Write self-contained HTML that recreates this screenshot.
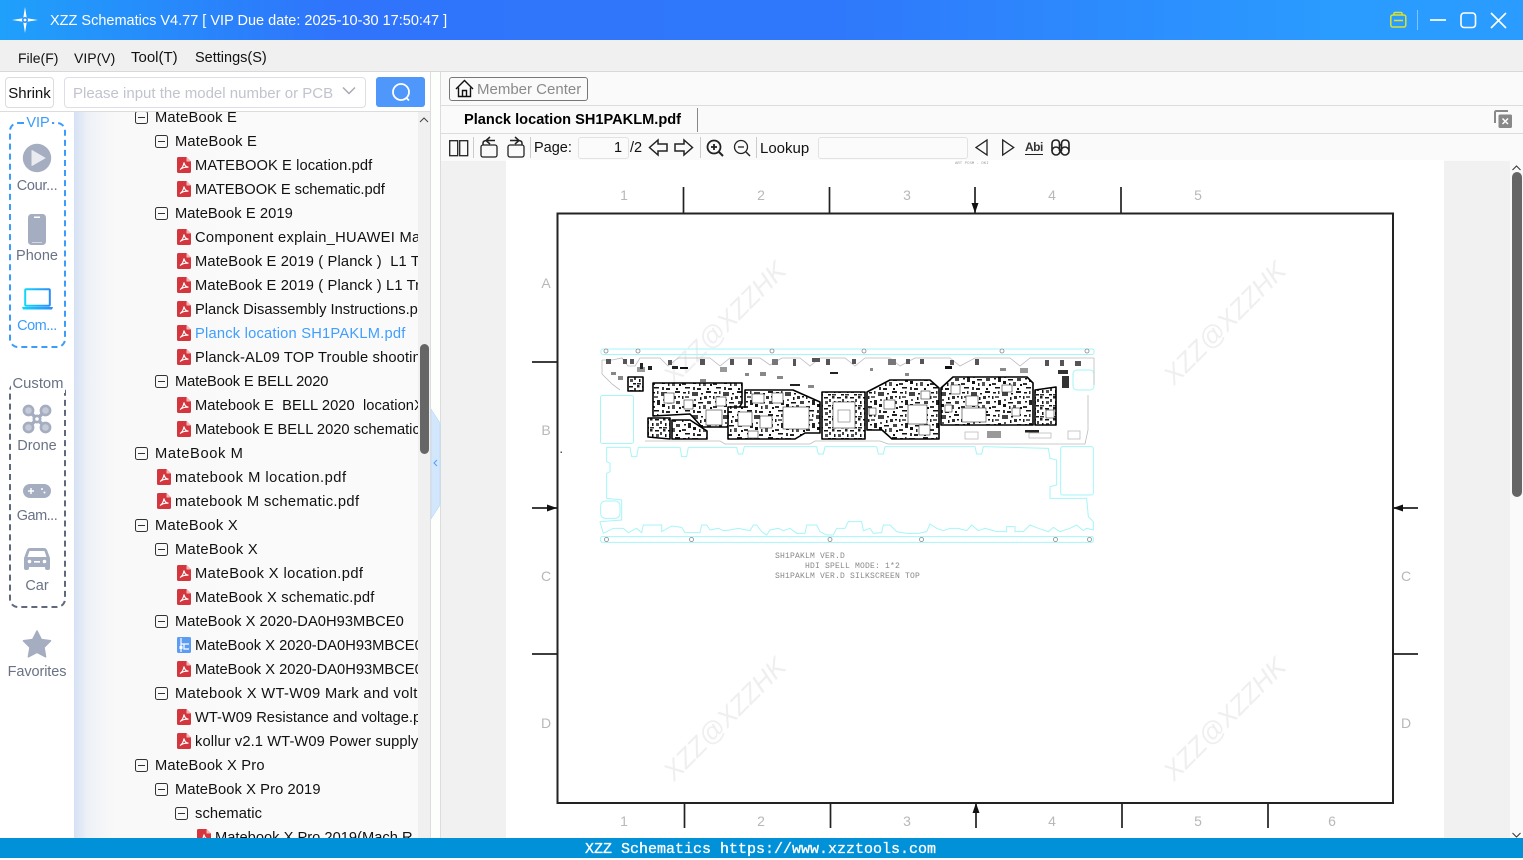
<!DOCTYPE html>
<html><head><meta charset="utf-8"><title>XZZ Schematics</title>
<style>
html,body{margin:0;padding:0}
body{width:1523px;height:858px;overflow:hidden;position:relative;background:#fff;font-family:"Liberation Sans","Noto Sans CJK SC",sans-serif;color:#111}
.a{position:absolute}
.t{position:absolute;white-space:nowrap}
#title{left:0;top:0;width:1523px;height:40px;background:linear-gradient(90deg,#1fa0fb 0,#2f74fb 22%,#2f78fb 55%,#2a9cff 88%,#2a9cff 100%)}
#menu{left:0;top:40px;width:1523px;height:31px;background:#f0f0f0;border-bottom:1px solid #d9d9d9}
.m{position:absolute;top:49px;font-size:14.5px;color:#111;line-height:18px;white-space:nowrap}
#lefttop{left:0;top:72px;width:430px;height:39px;background:#fff;border-bottom:1px solid #dcdcdc}
#side{left:0;top:112px;width:74px;height:726px;background:#fff}
#treebg{left:74px;top:112px;width:344px;height:726px;background:linear-gradient(90deg,#d5e1f3 0,#eef1f7 14px,#f9f9f9 40px,#fafafa 100%);overflow:hidden}
.r{position:absolute;height:24px;line-height:26px;font-size:14.7px;white-space:nowrap;color:#111}
.r svg{position:absolute;left:-18px;top:4px}
.box{position:absolute;width:10.5px;height:10.5px;border:1.3px solid #333;border-radius:2.5px;left:-20px;top:6px;background:transparent}
.box:after{content:"";position:absolute;left:2px;top:4.5px;width:6.5px;height:1.3px;background:#333}
.lab{position:absolute;left:4px;width:66px;text-align:center;font-size:14.5px;line-height:18px;color:#6a7285;white-space:nowrap}
#viewer{left:441px;top:161px;width:1069px;height:677px;background:#f1f1f1}
#page{left:506px;top:160px;width:938px;height:678px;background:#fff}
#foot{left:0;top:838px;width:1523px;height:20px;background:#0091d8}
</style></head><body>

<svg width="0" height="0" style="position:absolute"><defs>
<symbol id="pdf" viewBox="0 0 14 16">
<path d="M1.5 0H9.5L14 4.5V14.5A1.5 1.5 0 0 1 12.5 16H1.5A1.5 1.5 0 0 1 0 14.5V1.5A1.5 1.5 0 0 1 1.5 0Z" fill="#d4363e"/>
<path d="M9.5 0L14 4.5H9.5Z" fill="#f2b6b8"/>
<path d="M3 12.5C5 11.5 6.5 8.5 7 5.5C7.4 8 9 10 11.5 10.2C9 10 5.5 10.5 3 12.5Z" fill="none" stroke="#fff" stroke-width="1.1"/>
</symbol>
<symbol id="sch" viewBox="0 0 14 16">
<rect width="14" height="16" rx="1.5" fill="#5d9cf5"/>
<path d="M4 1V7H9M4 7V15M9 7H12M7 7V12H12" fill="none" stroke="#fff" stroke-width="1.2"/>
<rect x="2.5" y="9" width="3" height="3" fill="#fff"/>
</symbol>
<pattern id="c1" width="31" height="23" patternUnits="userSpaceOnUse">
<rect width="31" height="23" fill="#fff"/>
<rect x="1" y="1" width="3" height="1.5" fill="#111"/><rect x="6" y="0" width="1.5" height="3" fill="#333"/><rect x="10" y="1" width="6" height="4" fill="#444"/><rect x="19" y="2" width="2" height="1.5" fill="#111"/><rect x="24" y="0" width="5" height="2" fill="#222"/>
<rect x="0" y="5" width="1.5" height="3" fill="#222"/><rect x="3" y="5" width="4" height="2" fill="#666"/><rect x="18" y="6" width="1.5" height="3" fill="#111"/><rect x="22" y="5" width="3" height="3" fill="#333"/><rect x="27" y="5" width="2" height="1.5" fill="#111"/>
<rect x="2" y="10" width="2" height="1.5" fill="#111"/><rect x="6" y="9" width="3" height="5" fill="#222"/><rect x="12" y="8" width="2" height="2" fill="#555"/><rect x="16" y="11" width="5" height="1.5" fill="#111"/><rect x="25" y="10" width="4" height="3" fill="#444"/>
<rect x="0" y="15" width="4" height="2" fill="#333"/><rect x="11" y="13" width="3" height="3" fill="#111"/><rect x="17" y="15" width="1.5" height="3" fill="#222"/><rect x="21" y="14" width="3" height="4" fill="#555"/><rect x="28" y="16" width="2" height="2" fill="#111"/>
<rect x="3" y="19" width="5" height="1.5" fill="#111"/><rect x="11" y="19" width="2" height="3" fill="#333"/><rect x="15" y="20" width="4" height="2" fill="#222"/><rect x="25" y="20" width="2" height="2" fill="#111"/>
</pattern>
<pattern id="c2" width="13" height="11" patternUnits="userSpaceOnUse">
<rect width="13" height="11" fill="#fff"/>
<rect x="0" y="0" width="2.5" height="2.5" fill="#222"/><rect x="5" y="1" width="4" height="1.5" fill="#111"/><rect x="10" y="3" width="2" height="3" fill="#444"/>
<rect x="2" y="5" width="1.5" height="3" fill="#111"/><rect x="6" y="5" width="3" height="3" fill="#555"/><rect x="0" y="9" width="4" height="1.5" fill="#333"/><rect x="9" y="9" width="3" height="1.5" fill="#111"/>
</pattern>
</defs></svg>

<!-- Title bar -->
<div class="a" id="title"></div>
<svg class="a" style="left:11px;top:6px" width="28" height="28" viewBox="0 0 28 28"><path d="M14 1L15.8 12.2L27 14L15.8 15.8L14 27L12.2 15.8L1 14L12.2 12.2Z" fill="#fff"/><circle cx="14" cy="14" r="3" fill="#2a8ef8"/><circle cx="14" cy="14" r="1.4" fill="#fff"/></svg>
<div class="t" style="left:50px;top:12px;font-size:14.5px;line-height:19px;color:#fff">XZZ Schematics V4.77 [ VIP Due date: 2025-10-30 17:50:47 ]</div>
<svg class="a" style="left:1385px;top:6px" width="130" height="28" viewBox="1385 6 130 28" fill="none">
<path d="M1394 15V13.5Q1394 12.5 1395 12.5H1401Q1402 12.5 1402 13.5V15" stroke="#d9e22f" stroke-width="1.5"/>
<rect x="1390.8" y="15" width="15" height="12" rx="2" stroke="#d9e22f" stroke-width="1.5"/>
<path d="M1394 20.5H1403" stroke="#d9e22f" stroke-width="1.5"/>
<path d="M1417.5 10V30" stroke="#7fc4fb" stroke-width="1"/>
<path d="M1430 20H1446" stroke="#fff" stroke-width="1.7"/>
<rect x="1461" y="13" width="14.5" height="14.5" rx="3" stroke="#fff" stroke-width="1.6"/>
<path d="M1491 13L1506 28M1506 13L1491 28" stroke="#fff" stroke-width="1.6"/>
</svg>

<!-- Menu -->
<div class="a" id="menu"></div>
<div class="m" style="left:18px;font-size:14px">File(F)</div>
<div class="m" style="left:74px;font-size:14px">VIP(V)</div>
<div class="m" style="left:131px;font-size:15px">Tool(T)</div>
<div class="m" style="left:195px">Settings(S)</div>

<!-- Left top -->
<div class="a" id="lefttop"></div>
<div class="a" style="left:5px;top:77px;width:47px;height:29px;border:1px solid #dcdcdc;border-radius:4px;background:#fff;text-align:center;font-size:15px;line-height:31px">Shrink</div>
<div class="a" style="left:64px;top:77px;width:300px;height:29px;border:1px solid #dcdfe6;border-radius:4px;background:#fff"></div>
<div class="t" style="left:73px;top:84px;font-size:15px;line-height:19px;color:#c0c4cc">Please input the model number or PCB</div>
<svg class="a" style="left:341px;top:85px" width="16" height="12" viewBox="0 0 16 12"><path d="M2 2.5L8 8.5L14 2.5" fill="none" stroke="#a8abb2" stroke-width="1.5"/></svg>
<div class="a" style="left:376px;top:77px;width:49px;height:30px;background:#4f97fb;border-radius:3px"></div>
<svg class="a" style="left:389px;top:80px" width="24" height="24" viewBox="0 0 24 24" fill="none"><circle cx="12" cy="12" r="8" stroke="#fff" stroke-width="1.8"/><path d="M17.5 18L20 20.5" stroke="#fff" stroke-width="1.8"/></svg>

<!-- Side -->
<div class="a" id="side"></div>
<div class="a" style="left:9px;top:122px;width:53px;height:222px;border:2px dashed #3b9cfb;border-radius:9px"></div>
<div class="a" style="left:24px;top:114px;width:28px;height:18px;background:#fff;text-align:center;font-size:14.5px;line-height:18px;color:#3b9cfb">VIP</div>
<svg class="a" style="left:22px;top:143px" width="30" height="30" viewBox="0 0 30 30"><circle cx="15" cy="15" r="14.2" fill="#a5adc0"/><path d="M10 7.5L23 15L10 22.5Z" fill="#e9ebf0" stroke="#e9ebf0" stroke-linejoin="round"/></svg>
<div class="lab" style="top:177px;letter-spacing:-.3px">Cour...</div>
<svg class="a" style="left:28px;top:214px" width="18" height="31" viewBox="0 0 18 31"><rect width="18" height="31" rx="3.5" fill="#a5adc0"/><rect x="6" y="2.5" width="6" height="1.5" fill="#fff"/><rect x="4" y="28" width="10" height="1" fill="#d5d8e0"/></svg>
<div class="lab" style="top:247px">Phone</div>
<svg class="a" style="left:22px;top:288px" width="31" height="23" viewBox="0 0 31 23"><defs><linearGradient id="lg" x1="0" x2="1"><stop offset="0" stop-color="#12d6fb"/><stop offset="1" stop-color="#2a8cfa"/></linearGradient></defs><rect x="3.2" y="1.2" width="24.6" height="16.6" rx="1" fill="#fff" stroke="url(#lg)" stroke-width="2"/><path d="M0 19H31L30 21.5H1Z" fill="url(#lg)"/></svg>
<div class="lab" style="top:317px;color:#3b9cfb;letter-spacing:-.5px">Com...</div>

<div class="a" style="left:9px;top:382px;width:53px;height:222px;border:2px dashed #5f697b;border-radius:9px"></div>
<div class="a" style="left:11px;top:375px;width:54px;height:18px;background:#fff;text-align:center;font-size:14.8px;line-height:18px;color:#6a7285">Custom</div>
<svg class="a" style="left:22px;top:404px" width="30" height="30" viewBox="0 0 30 30" fill="none"><path d="M7 7L23 23M23 7L7 23" stroke="#a5adc0" stroke-width="3.4"/><g stroke="#a5adc0" stroke-width="2.6" fill="#c5cad6"><circle cx="6.5" cy="6.5" r="4.6"/><circle cx="23.5" cy="6.5" r="4.6"/><circle cx="6.5" cy="23.5" r="4.6"/><circle cx="23.5" cy="23.5" r="4.6"/></g><circle cx="15" cy="15" r="4.5" fill="#a5adc0"/><circle cx="15" cy="15" r="1.8" fill="#fff"/></svg>
<div class="lab" style="top:437px">Drone</div>
<svg class="a" style="left:23px;top:484px" width="28" height="14" viewBox="0 0 28 14"><rect width="28" height="14" rx="7" fill="#a5adc0"/><path d="M5 7H11M8 4V10" stroke="#fff" stroke-width="1.5"/><circle cx="19" cy="5" r="1" fill="#fff"/><circle cx="21.5" cy="8.5" r="1" fill="#fff"/></svg>
<div class="lab" style="top:507px;letter-spacing:-.5px">Gam...</div>
<svg class="a" style="left:23px;top:547px" width="28" height="24" viewBox="0 0 28 24"><path d="M1 11L4 3Q5 1 7 1H21Q23 1 24 3L27 11V21Q27 23 25 23H24Q22 23 22 21V20H6V21Q6 23 4 23H3Q1 23 1 21Z" fill="#a5adc0"/><path d="M6.5 4H21.5L23.5 10H4.5Z" fill="#fff"/><circle cx="6.5" cy="14.5" r="1.8" fill="#fff"/><circle cx="21.5" cy="14.5" r="1.8" fill="#fff"/><rect x="11" y="14" width="6" height="1.6" fill="#fff"/></svg>
<div class="lab" style="top:577px">Car</div>
<svg class="a" style="left:22px;top:630px" width="30" height="28" viewBox="0 0 30 28"><path d="M15 1L19.3 9.5L28.5 10.8L22 17.4L23.6 26.8L15 22.3L6.4 26.8L8 17.4L1.5 10.8L10.7 9.5Z" fill="#a5adc0" stroke="#a5adc0" stroke-width="1.5" stroke-linejoin="round"/></svg>
<div class="lab" style="top:663px;letter-spacing:-.1px">Favorites</div>

<!-- Tree -->
<div class="a" id="treebg">
<div class="r" style="left:81px;top:-7px;letter-spacing:.2px"><i class="box"></i>MateBook E</div>
<div class="r" style="left:101px;top:17px;letter-spacing:.2px"><i class="box"></i>MateBook E</div>
<div class="r" style="left:121px;top:41px;letter-spacing:.09px"><svg width="14" height="16"><use href="#pdf"/></svg>MATEBOOK E location.pdf</div>
<div class="r" style="left:121px;top:65px;letter-spacing:-.04px"><svg width="14" height="16"><use href="#pdf"/></svg>MATEBOOK E schematic.pdf</div>
<div class="r" style="left:101px;top:89px;letter-spacing:.07px"><i class="box"></i>MateBook E 2019</div>
<div class="r" style="left:121px;top:113px;letter-spacing:.3px"><svg width="14" height="16"><use href="#pdf"/></svg>Component explain_HUAWEI MateBook</div>
<div class="r" style="left:121px;top:137px;letter-spacing:.15px"><svg width="14" height="16"><use href="#pdf"/></svg>MateBook E 2019 ( Planck )&nbsp; L1 Trouble</div>
<div class="r" style="left:121px;top:161px;letter-spacing:.15px"><svg width="14" height="16"><use href="#pdf"/></svg>MateBook E 2019 ( Planck ) L1 Trouble</div>
<div class="r" style="left:121px;top:185px"><svg width="14" height="16"><use href="#pdf"/></svg>Planck Disassembly Instructions.pdf</div>
<div class="r" style="left:121px;top:209px;color:#409eff;letter-spacing:.21px"><svg width="14" height="16"><use href="#pdf"/></svg>Planck location SH1PAKLM.pdf</div>
<div class="r" style="left:121px;top:233px;letter-spacing:.15px"><svg width="14" height="16"><use href="#pdf"/></svg>Planck-AL09 TOP Trouble shooting</div>
<div class="r" style="left:101px;top:257px;letter-spacing:-.15px"><i class="box"></i>MateBook E BELL 2020</div>
<div class="r" style="left:121px;top:281px;letter-spacing:.05px"><svg width="14" height="16"><use href="#pdf"/></svg>Matebook E&nbsp; BELL 2020&nbsp; locationX</div>
<div class="r" style="left:121px;top:305px"><svg width="14" height="16"><use href="#pdf"/></svg>Matebook E BELL 2020 schematic</div>
<div class="r" style="left:81px;top:329px;letter-spacing:.6px"><i class="box"></i>MateBook M</div>
<div class="r" style="left:101px;top:353px;letter-spacing:.5px"><svg width="14" height="16"><use href="#pdf"/></svg>matebook M location.pdf</div>
<div class="r" style="left:101px;top:377px;letter-spacing:.37px"><svg width="14" height="16"><use href="#pdf"/></svg>matebook M schematic.pdf</div>
<div class="r" style="left:81px;top:401px;letter-spacing:.3px"><i class="box"></i>MateBook X</div>
<div class="r" style="left:101px;top:425px;letter-spacing:.3px"><i class="box"></i>MateBook X</div>
<div class="r" style="left:121px;top:449px;letter-spacing:.4px"><svg width="14" height="16"><use href="#pdf"/></svg>MateBook X location.pdf</div>
<div class="r" style="left:121px;top:473px;letter-spacing:.2px"><svg width="14" height="16"><use href="#pdf"/></svg>MateBook X schematic.pdf</div>
<div class="r" style="left:101px;top:497px;letter-spacing:.04px"><i class="box"></i>MateBook X 2020-DA0H93MBCE0</div>
<div class="r" style="left:121px;top:521px"><svg width="14" height="16"><use href="#sch"/></svg>MateBook X 2020-DA0H93MBCE0</div>
<div class="r" style="left:121px;top:545px"><svg width="14" height="16"><use href="#pdf"/></svg>MateBook X 2020-DA0H93MBCE0</div>
<div class="r" style="left:101px;top:569px;letter-spacing:.35px"><i class="box"></i>Matebook X WT-W09 Mark and voltage</div>
<div class="r" style="left:121px;top:593px"><svg width="14" height="16"><use href="#pdf"/></svg>WT-W09 Resistance and voltage.pdf</div>
<div class="r" style="left:121px;top:617px;letter-spacing:.1px"><svg width="14" height="16"><use href="#pdf"/></svg>kollur v2.1 WT-W09 Power supply</div>
<div class="r" style="left:81px;top:641px;letter-spacing:.2px"><i class="box"></i>MateBook X Pro</div>
<div class="r" style="left:101px;top:665px;letter-spacing:.1px"><i class="box"></i>MateBook X Pro 2019</div>
<div class="r" style="left:121px;top:689px;letter-spacing:.1px"><i class="box"></i>schematic</div>
<div class="r" style="left:141px;top:713px"><svg width="14" height="16"><use href="#pdf"/></svg>Matebook X Pro 2019(Mach R</div>
</div>
<div class="a" style="left:418px;top:112px;width:12px;height:726px;background:#f0f0f0"></div>
<svg class="a" style="left:418px;top:114px" width="12" height="12" viewBox="0 0 12 12"><path d="M2 8L6 4L10 8" fill="none" stroke="#444" stroke-width="1"/></svg>
<div class="a" style="left:420px;top:344px;width:9px;height:110px;background:#666;border-radius:5px"></div>

<!-- Splitter -->
<div class="a" style="left:430px;top:72px;width:1px;height:766px;background:#dcdcdc"></div>
<div class="a" style="left:431px;top:72px;width:9px;height:766px;background:#fcfffc"></div>
<div class="a" style="left:440px;top:72px;width:1px;height:766px;background:#dcdcdc"></div>
<svg class="a" style="left:431px;top:408px" width="10" height="112" viewBox="431 408 10 112"><path d="M431 409L440 423V505L431 519Z" fill="#d2e7fc" stroke="#b5d8fa" stroke-width=".6"/><path d="M437 460L434 463L437 466" fill="none" stroke="#4f9ffb" stroke-width="1"/></svg>

<!-- Right panel bars -->
<div class="a" style="left:441px;top:72px;width:1082px;height:33px;background:#fafafa;border-bottom:1px solid #dcdcdc"></div>
<div class="a" style="left:441px;top:106px;width:1082px;height:27px;background:#fafafa;border-bottom:1px solid #dcdcdc"></div>
<div class="a" style="left:441px;top:134px;width:1082px;height:27px;background:#fafafa"></div>

<div class="a" style="left:449px;top:77px;width:137px;height:22px;border:1px solid #777;border-radius:3px"></div>
<svg class="a" style="left:455px;top:79px" width="19" height="19" viewBox="0 0 19 19" fill="none" stroke="#111" stroke-width="1.4"><path d="M1 10L9.5 1.5L18 10"/><path d="M3.5 8.5V17.5H15.5V8.5"/><path d="M7.5 17.5V11.5H11.5V17.5"/></svg>
<div class="t" style="left:477px;top:80px;font-size:15px;line-height:19px;color:#8a8a8a">Member Center</div>
<div class="t" style="left:464px;top:111px;font-size:14.6px;line-height:19px;font-weight:bold;color:#000">Planck location SH1PAKLM.pdf</div>
<div class="a" style="left:697px;top:108px;width:1px;height:24px;background:#888"></div>
<svg class="a" style="left:1494px;top:110px" width="19" height="19" viewBox="0 0 19 19"><path d="M1 13V2.5Q1 1 2.5 1H14" fill="none" stroke="#888" stroke-width="2"/><rect x="4.5" y="4.5" width="13.5" height="13.5" rx="1.5" fill="#888"/><path d="M8.5 8.5L14 14M14 8.5L8.5 14" stroke="#fff" stroke-width="1.5"/></svg>

<!-- Toolbar -->
<svg class="a" style="left:441px;top:134px" width="640" height="27" viewBox="441 134 640 27" fill="none" stroke="#222" stroke-width="1.3">
<rect x="449.7" y="140.7" width="8" height="15"/><rect x="459.7" y="140.7" width="8" height="15"/>
<path d="M473.5 137V158M530.5 137V158M700.5 137V158M756.5 137V158" stroke="#ccc" stroke-width="1"/>
<rect x="481" y="145" width="16" height="12" rx="2"/><path d="M483 145V143Q483 140.5 487 140.5H495M490 137L486 140.5L490 144" stroke-width="1.5"/>
<rect x="508" y="145" width="16" height="12" rx="2"/><path d="M522 145V143Q522 140.5 518 140.5H510M515 137L519 140.5L515 144" stroke-width="1.5"/>
<path d="M649.5 147.5L658 140V144H667V151H658V155Z" stroke-width="1.5"/>
<path d="M692.5 147.5L684 140V144H675V151H684V155Z" stroke-width="1.5"/>
<circle cx="714" cy="147" r="6.5" stroke-width="1.8"/><path d="M719 152L723 156" stroke-width="2"/><path d="M711 147H717M714 144V150" stroke-width="1.8"/>
<circle cx="741" cy="147" r="6.5"/><path d="M746 152L750 156" stroke-width="1.5"/><path d="M738 147H744"/>
<path d="M987 140V155L976 147.5Z"/>
<path d="M1002.7 140V155L1013.7 147.5Z"/>
<path d="M1025 154.5H1043" stroke-width="1"/>
<g stroke-width="1.6"><path d="M1052 151V144Q1052 140 1056 140Q1059.5 140 1059.5 144V151M1061.5 151V144Q1061.5 140 1065 140Q1069 140 1069 144V151M1059.5 145H1061.5"/><circle cx="1056" cy="151" r="4"/><circle cx="1065" cy="151" r="4"/></g>
</svg>
<div class="t" style="left:1025px;top:140px;font-size:12px;line-height:14px;font-weight:bold;color:#333;letter-spacing:-.5px">Abi</div>
<div class="t" style="left:534px;top:139px;font-size:14.5px;line-height:19px">Page:</div>
<div class="a" style="left:578px;top:137px;width:49px;height:20px;border:1px solid #e2e2e2;border-radius:3px;background:#fbfbfb"></div>
<div class="t" style="left:614px;top:139px;font-size:14.5px;line-height:19px">1</div>
<div class="t" style="left:630px;top:139px;font-size:14.5px;line-height:19px">/2</div>
<div class="t" style="left:760px;top:139px;font-size:15px;line-height:19px">Lookup</div>
<div class="a" style="left:818px;top:137px;width:148px;height:20px;border:1px solid #e2e2e2;border-radius:3px;background:#fbfbfb"></div>

<!-- Viewer -->
<div class="a" id="viewer"></div>
<div class="a" id="page"></div>
<div class="a" style="left:1510px;top:161px;width:13px;height:677px;background:#fafafa"></div>
<svg class="a" style="left:1511px;top:164px" width="11" height="8" viewBox="0 0 11 8"><path d="M1.5 6L5.5 2L9.5 6" fill="none" stroke="#333" stroke-width="1"/></svg>
<svg class="a" style="left:1511px;top:832px" width="11" height="6" viewBox="0 0 11 6"><path d="M1.5 1L5.5 5L9.5 1" fill="none" stroke="#333" stroke-width="1"/></svg>
<div class="a" style="left:1512px;top:172px;width:10px;height:325px;background:#666;border-radius:5px"></div>

<svg class="a" style="left:506px;top:160px" width="938" height="678" viewBox="506 160 938 678" font-family="Liberation Sans, sans-serif">
<!-- watermarks -->
<g fill="#efefef" font-size="26" font-style="italic">
<text transform="translate(674 386) rotate(-45)">XZZ@XZZHK</text>
<text transform="translate(1174 386) rotate(-45)">XZZ@XZZHK</text>
<text transform="translate(674 782) rotate(-45)">XZZ@XZZHK</text>
<text transform="translate(1174 782) rotate(-45)">XZZ@XZZHK</text>
</g>
<text x="955" y="164" font-size="4" fill="#999" font-family="Liberation Mono, monospace">ART PCSM - DKI</text>
<!-- frame -->
<rect x="557.5" y="213.5" width="835.5" height="589.5" fill="none" stroke="#222" stroke-width="2"/>
<path d="M683.5 187V213M829.5 187V213M975 187V213M1121 187V213M684.5 803V828M830.5 803V828M976 803V828M1122 803V828M1268 803V828M532 362H557M532 508H557M532 654H557M1393 508H1418M1393 654H1418" stroke="#222" stroke-width="1.7" fill="none"/>
<path d="M971.5 203L975 213L978.5 203ZM972.5 813L976 803L979.5 813ZM547 504.5L557 508L547 511.5ZM1403 504.5L1393 508L1403 511.5Z" fill="#111"/>
<rect x="560.5" y="451.5" width="1.5" height="1.5" fill="#555"/>
<g fill="#b8b8b8" font-size="14" text-anchor="middle" font-family="Liberation Sans, sans-serif">
<text x="624" y="200">1</text><text x="761" y="200">2</text><text x="907" y="200">3</text><text x="1052" y="200">4</text><text x="1198" y="200">5</text>
<text x="624" y="826">1</text><text x="761" y="826">2</text><text x="907" y="826">3</text><text x="1052" y="826">4</text><text x="1198" y="826">5</text><text x="1332" y="826">6</text>
<text x="546" y="288">A</text><text x="546" y="435">B</text><text x="546" y="581">C</text><text x="546" y="728">D</text>
<text x="1406" y="581">C</text><text x="1406" y="728">D</text>
</g>

<!-- Board: cyan and grey outlines -->
<g fill="none" stroke="#a6f5f8" stroke-width="1">
<rect x="601" y="349" width="493" height="5.5" rx="2"/>
<rect x="600.5" y="395.5" width="33" height="48" rx="2"/>
<rect x="1073" y="370" width="21" height="20" rx="4"/>
<g transform="translate(590 440) scale(.33333)">
<path vector-effect="non-scaling-stroke" d="M50 22H120L125 50H140L145 22H270L275 50H290L295 22H440L445 42H458L463 20H680L685 42H700L705 20H860L865 42H880L885 20H1155L1160 42H1175L1180 20L1375 25L1380 55L1400 60V135L1380 140V175H1490L1495 230L1510 245V270L1490 265L1480 272L1460 255L1440 265L1410 275L1390 262L1375 275L1345 265L1320 255L1300 275H1275V260H1250V275H1220L1185 265L1165 272L1145 255L1130 272L1105 265L1080 265L1060 272L1040 265L1020 252L1010 275L985 280H950L920 275L900 255H880L875 278L850 280L840 265L820 272L815 245H775L765 265L740 265L730 285H710L690 275L680 255H650L645 280H620L600 265L580 272L565 265L540 270L530 285L515 275L500 255H490L480 272L445 265L420 270L400 272L385 265L360 270L350 255H335L330 278H285L275 262L245 258L215 275V255H160L155 278L140 265L115 278L100 265H70L40 280L30 245L95 240V180L50 175V100L60 95V70L50 65Z"/>
<rect vector-effect="non-scaling-stroke" x="32" y="290" width="1478" height="17" rx="5"/>
<rect vector-effect="non-scaling-stroke" x="1412" y="20" width="98" height="145" rx="6"/>
<rect vector-effect="non-scaling-stroke" x="32" y="183" width="58" height="52" rx="14"/>
</g>
</g>
<g fill="#fff" stroke="#888" stroke-width=".8">
<circle cx="606.5" cy="539.5" r="2"/><circle cx="691.5" cy="539.5" r="2"/><circle cx="830" cy="539.5" r="2"/><circle cx="921.5" cy="539.5" r="2"/><circle cx="1055.5" cy="539.5" r="2"/><circle cx="1089.5" cy="539.5" r="2"/>
<circle cx="606" cy="351" r="2"/><circle cx="638" cy="351" r="2"/><circle cx="772" cy="351" r="2"/><circle cx="864" cy="351" r="2"/><circle cx="1002" cy="351" r="2"/><circle cx="1087" cy="351" r="2"/>
</g>
<!-- board top edge, grey -->
<path d="M602 360H612L622 358L628 366H635L640 358H660L668 366L678 358H710L720 366L730 358H760L770 365L782 358H800L810 366L820 358H845L855 366L865 358H890L900 366L915 358H950L960 366L975 358H1010L1020 366L1030 358H1094V385" fill="none" stroke="#bbb" stroke-width=".8"/>
<path d="M602 360V374L612 384L620 390M645 441H720L725 444H810L815 441H880L888 444H1085L1088 430V395" fill="none" stroke="#bbb" stroke-width=".8"/>

<!-- silk blocks on top region -->
<g fill="#555">
<rect x="606" y="359" width="5" height="5"/><rect x="623" y="359" width="4" height="5"/><rect x="630" y="359" width="4" height="5"/><rect x="637" y="367" width="8" height="5" fill="#999"/>
<rect x="648" y="366" width="4" height="4" fill="#222"/><rect x="668" y="360" width="4" height="5"/><rect x="680" y="367" width="8" height="2" fill="#111"/><rect x="700" y="359" width="5" height="6"/><rect x="720" y="367" width="7" height="5" fill="#999"/><rect x="730" y="359" width="4" height="6"/>
<rect x="748" y="359" width="4" height="6"/><rect x="772" y="359" width="6" height="6" fill="#777"/><rect x="793" y="359" width="3" height="7"/><rect x="812" y="358" width="8" height="4"/><rect x="826" y="359" width="4" height="6"/>
<rect x="852" y="359" width="4" height="5"/><rect x="888" y="359" width="8" height="6" fill="#777"/><rect x="906" y="359" width="4" height="5"/><rect x="920" y="359" width="4" height="5"/><rect x="945" y="366" width="7" height="3" fill="#111"/><rect x="950" y="360" width="4" height="5"/>
<rect x="975" y="359" width="4" height="6"/><rect x="1020" y="368" width="8" height="5" fill="#999"/><rect x="1045" y="360" width="4" height="6"/><rect x="1060" y="360" width="4" height="6"/><rect x="1075" y="361" width="6" height="5"/><rect x="1058" y="370" width="10" height="4" fill="#333"/><rect x="1062" y="376" width="7" height="12" fill="#333"/>
<rect x="640" y="363" width="3" height="6" fill="#222"/><rect x="672" y="366" width="6" height="3" fill="#222"/><rect x="700" y="379" width="6" height="3" fill="#888"/><rect x="760" y="372" width="6" height="4" fill="#888"/><rect x="790" y="384" width="10" height="2" fill="#222"/><rect x="808" y="385" width="6" height="3" fill="#888"/>
<rect x="611" y="372" width="5" height="3" fill="#888"/><rect x="618" y="376" width="5" height="4" fill="#888"/><rect x="745" y="373" width="4" height="3" fill="#888"/><rect x="777" y="376" width="6" height="3" fill="#888"/><rect x="830" y="372" width="8" height="2" fill="#222"/><rect x="870" y="368" width="3" height="3" fill="#888"/><rect x="905" y="373" width="4" height="3" fill="#888"/><rect x="1000" y="368" width="6" height="3" fill="#888"/>
</g>
<!-- copper blocks -->
<g stroke="#000" stroke-width="1.6" stroke-linejoin="round">
<path fill="url(#c2)" d="M628 377H643V391H628Z"/>
<path fill="url(#c1)" d="M653 383H742V403L727 427H702L690 414L653 416Z"/>
<path fill="url(#c2)" d="M648 418H670V439L648 437Z"/>
<path fill="url(#c1)" d="M672 420H690L707 431V439H672Z"/>
<path fill="url(#c1)" d="M745 390H793L820 402V433H805L795 439H728V407H745Z"/>
<path fill="url(#c2)" d="M822 392H865V439H822Z"/>
<path fill="url(#c1)" d="M890 380H930L939 388V439H892L882 430H867V392Z"/>
<path fill="url(#c1)" d="M953 377H1027L1033 383V425H941V388Z"/>
<path fill="url(#c2)" d="M1035 390L1056 387V425H1035Z"/>
</g>
<!-- chips -->
<g fill="#fff" stroke="#333" stroke-width=".6">
<rect x="706" y="410" width="16" height="15"/><rect x="664" y="393" width="10" height="10"/><rect x="684" y="400" width="9" height="9"/><rect x="716" y="397" width="10" height="9"/>
<rect x="783" y="407" width="26" height="22"/><rect x="738" y="412" width="14" height="14"/><rect x="760" y="416" width="12" height="12"/><rect x="748" y="431" width="10" height="7"/><rect x="752" y="394" width="12" height="9"/><rect x="772" y="393" width="11" height="10"/>
<rect x="833" y="402" width="22" height="26"/>
<rect x="908" y="405" width="19" height="19"/><rect x="884" y="400" width="11" height="9"/><rect x="921" y="391" width="9" height="8"/><rect x="919" y="425" width="11" height="10"/><rect x="869" y="408" width="7" height="7"/>
<rect x="962" y="408" width="24" height="14"/><rect x="966" y="396" width="12" height="10"/><rect x="951" y="385" width="9" height="9"/><rect x="1002" y="385" width="10" height="7"/><rect x="945" y="405" width="7" height="7"/><rect x="1012" y="408" width="8" height="8"/><rect x="1046" y="410" width="8" height="8"/>
</g>
<rect x="838" y="410" width="12" height="12" fill="#fff" stroke="#888" stroke-width=".7"/>

<!-- lower connectors -->
<g fill="none" stroke="#bbb" stroke-width=".8">
<rect x="965" y="432" width="13" height="7"/><rect x="1029" y="433" width="22" height="5"/><rect x="1068" y="431" width="12" height="8"/>
</g>
<rect x="1025" y="430" width="14" height="2.5" fill="#222"/><rect x="987" y="431" width="14" height="7" fill="#999"/>

<g font-family="Liberation Mono, monospace" font-size="8" fill="#888" letter-spacing=".2" xml:space="preserve">
<text x="775" y="558">SH1PAKLM VER.D</text>
<text x="805" y="568">HDI SPELL MODE: 1*2</text>
<text x="775" y="578">SH1PAKLM VER.D SILKSCREEN TOP</text>
</g>
</svg>

<!-- Footer -->
<div class="a" id="foot"></div>
<div class="t" style="left:585px;top:840px;font-family:'Liberation Mono',monospace;font-size:15px;line-height:20px;color:#fff;-webkit-text-stroke:.3px #fff">XZZ Schematics https://www.xzztools.com</div>
</body></html>
